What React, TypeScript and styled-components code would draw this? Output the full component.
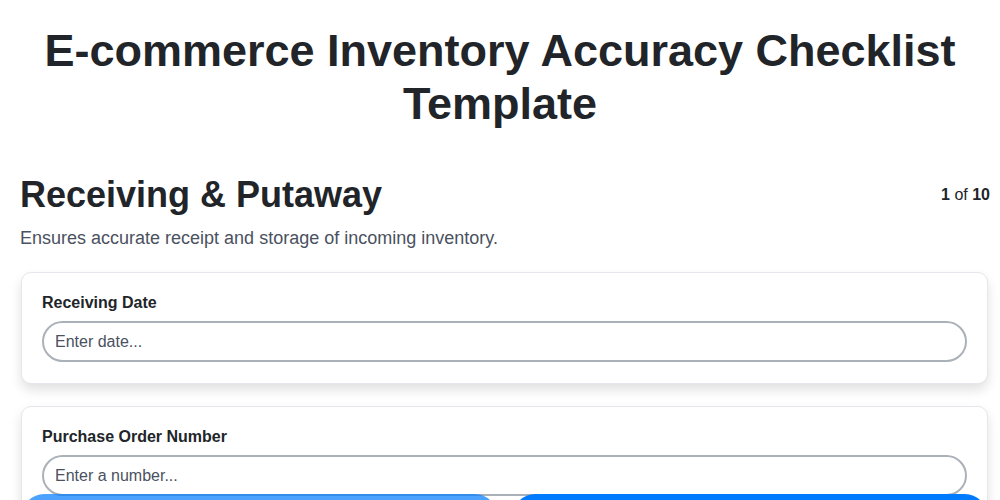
import React from "react";
import styled, { createGlobalStyle } from "styled-components";

const GlobalStyle = createGlobalStyle`
  * {
    box-sizing: border-box;
  }
  html {
    overflow: hidden;
  }
  body {
    margin: 0;
    background: #ffffff;
    font-family: "Liberation Sans", Arial, sans-serif;
    color: #212529;
  }
`

const Page = styled.div`
  padding: 24px 10px 80px 20px;
`

const Title = styled.h1`
  margin: 0 10px 43px 0;
  text-align: center;
  font-size: 45px;
  line-height: 53px;
  font-weight: 700;
  color: #212529;
`

const SectionHead = styled.div`
  display: flex;
  flex-direction: row;
  justify-content: space-between;
  align-items: flex-start;
`

const SectionTitle = styled.h2`
  margin: 0;
  font-size: 36px;
  line-height: 44px;
  font-weight: 700;
  color: #212529;
`

const Counter = styled.div`
  font-size: 16px;
  line-height: 20px;
  padding-top: 12px;
  color: #212529;

  b {
    font-weight: 700;
  }
`

const Description = styled.p`
  margin: 9px 0 22px 0;
  font-size: 18px;
  line-height: 24px;
  color: #4a5160;
`

const Fields = styled.div`
  display: flex;
  flex-direction: column;
  gap: 22px;
  padding: 0 2px 0 1px;
`

const Card = styled.div`
  background: #ffffff;
  border: 1px solid #e6e6ec;
  border-radius: 10px;
  padding: 20px 20px 21px 20px;
  box-shadow: 0 6px 12px rgba(0, 0, 0, 0.12);
`

const Label = styled.label`
  display: block;
  font-size: 16px;
  line-height: 20px;
  font-weight: 700;
  color: #212529;
  margin-bottom: 8px;
`

const TextInput = styled.input`
  display: block;
  width: 100%;
  height: 41px;
  border: 2px solid #aab1b9;
  border-radius: 999px;
  padding: 0 11px;
  font-family: inherit;
  font-size: 16px;
  color: #212529;
  background: #ffffff;
  outline: none;

  &::placeholder {
    color: #4a5160;
  }
`

const Footer = styled.div`
  position: fixed;
  left: 0;
  right: 0;
  bottom: -38px;
  display: flex;
  flex-direction: row;
  gap: 16px;
  padding: 0 13px 0 22px;
`

const NavButton = styled.button<{ $disabled?: boolean }>`
  flex: 1;
  height: 44px;
  border: none;
  border-radius: 22px;
  background: #007bff;
  opacity: ${(p) => (p.$disabled ? 0.7 : 1)};
`

export default function App() {
  return (
    <>
      <GlobalStyle />
      <Page>
        <Title>E-commerce Inventory Accuracy Checklist Template</Title>
        <SectionHead>
          <SectionTitle>Receiving &amp; Putaway</SectionTitle>
          <Counter>
            <b>1</b> of <b>10</b>
          </Counter>
        </SectionHead>
        <Description>Ensures accurate receipt and storage of incoming inventory.</Description>
        <Fields>
          <Card>
            <Label>Receiving Date</Label>
            <TextInput placeholder="Enter date..." />
          </Card>
          <Card>
            <Label>Purchase Order Number</Label>
            <TextInput placeholder="Enter a number..." />
          </Card>
        </Fields>
      </Page>
      <Footer>
        <NavButton $disabled aria-label="Previous" />
        <NavButton aria-label="Next" />
      </Footer>
    </>
  );
}
